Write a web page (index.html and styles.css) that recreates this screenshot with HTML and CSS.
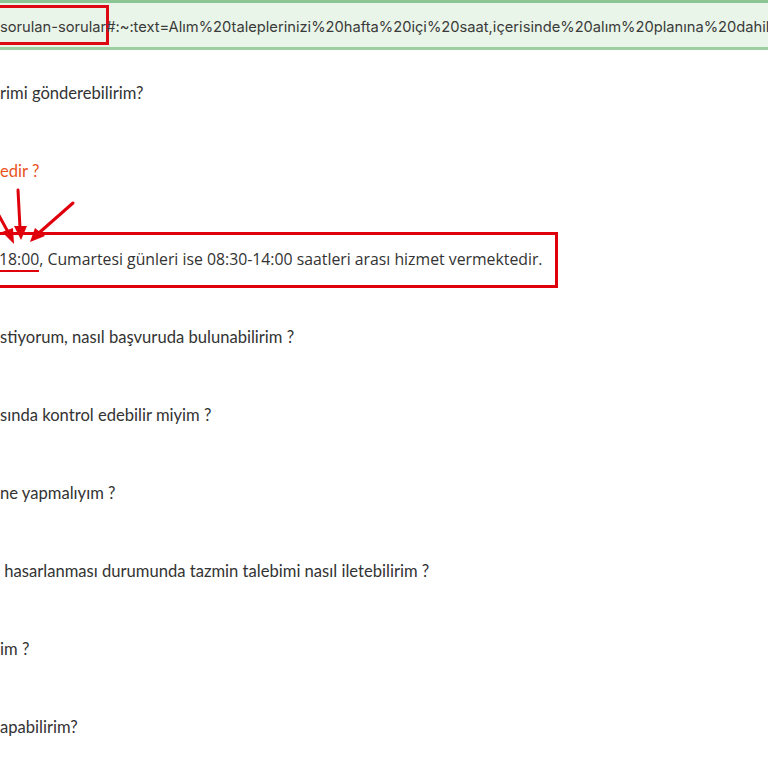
FILE: index.html
```html
<!DOCTYPE html>
<html lang="tr">
<head>
  <meta charset="UTF-8" />
  <meta name="viewport" content="width=device-width, initial-scale=1.0"/>
  <title>Sıkça Sorulan Sorular</title>
  <link rel="stylesheet" href="styles.css">
</head>
<body>

  <div class="url-bar">
    <div class="url-text"><span class="url-mark">sorulan-sorular</span>#:~:text=Alım%20taleplerinizi%20hafta%20içi%20saat,içerisinde%20alım%20planına%20dahil</div>
  </div>

  <div class="faq">
    <p class="question">rimi gönderebilirim?</p>
    <p class="question active">edir ?</p>
    <div class="answer">
      <span class="hl">18:00</span>, Cumartesi günleri ise 08:30-14:00 saatleri arası hizmet vermektedir.
    </div>
    <p class="question">stiyorum, nasıl başvuruda bulunabilirim ?</p>
    <p class="question">sında kontrol edebilir miyim ?</p>
    <p class="question">ne yapmalıyım ?</p>
    <p class="question">&nbsp;hasarlanması durumunda tazmin talebimi nasıl iletebilirim ?</p>
    <p class="question">im ?</p>
    <p class="question">apabilirim?</p>
  </div>

  <!-- annotation arrows -->
  <svg class="arrows" width="100" height="70" viewBox="0 0 100 70">
    <g stroke="#e0000b" stroke-width="3" fill="#e0000b" stroke-linecap="round">
      <line x1="-4" y1="20" x2="8" y2="42" />
      <polygon points="14,54 2,42 13,38" stroke="none" />
      <line x1="18" y1="0" x2="20" y2="38" />
      <polygon points="21,50 14,36 27,36" stroke="none" />
      <line x1="73" y1="13" x2="40" y2="42" />
      <polygon points="30,52 35,38 45,46" stroke="none" />
    </g>
  </svg>

</body>
</html>
```

FILE: styles.css
```css
* { margin: 0; padding: 0; box-sizing: border-box; }
body { background-color: #ffffff; font-family: 'Lato', 'Noto Sans', sans-serif; color: #333; position: relative; overflow: hidden; }
.url-bar {
  height: 50px;
  background-color: #e9f5e8;
  border-top: 3px solid #8cc494;
  border-bottom: 3px solid #9ccf9f;
  padding-top: 5px;
}
.url-text {
  font-family: 'Inter', sans-serif;
  font-size: 14.7px;
  color: #3a3a3a;
  white-space: nowrap;
  height: 40px;
  line-height: 38px;
}
.url-mark {
  display: inline-block;
  height: 40px;
  border: 3px solid #dd0a14;
  border-left: none;
  margin-top: -3px;
  margin-right: -3px;
  vertical-align: top;
}
.faq { padding-top: 31px; }
.question {
  font-size: 16.6px;
  line-height: 24px;
  margin-bottom: 54px;
  white-space: nowrap;
}
.question.active { color: #e9541d; margin-bottom: 0; }
.answer {
  margin-top: 49px;
  margin-bottom: 37px;
  margin-left: -10px;
  width: 568px;
  height: 56px;
  border: 3px solid #e0000b;
  padding: 12px 0 0 10px;
  font-family: 'Open Sans', sans-serif;
  font-size: 15.8px;
  line-height: 24px;
  white-space: nowrap;
}
.hl { border-bottom: 2px solid #e0000b; margin-left: -4px; }
.arrows { position: absolute; left: 0; top: 190px; overflow: visible; }
```
